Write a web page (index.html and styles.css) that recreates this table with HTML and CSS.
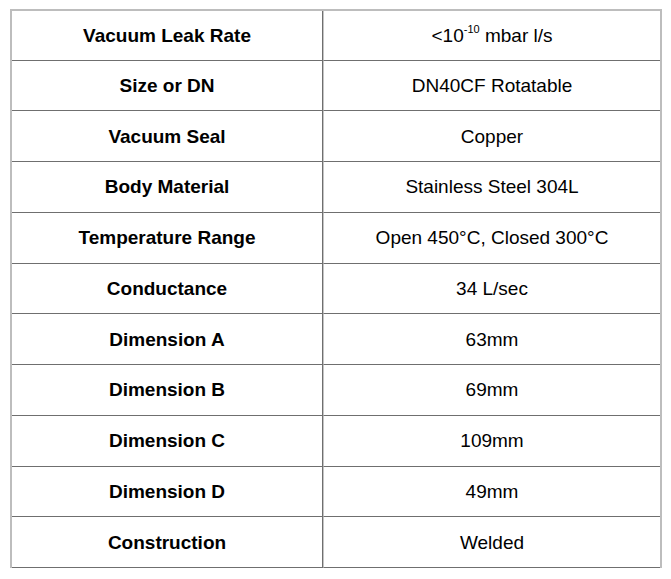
FILE: index.html
```html
<!DOCTYPE html>
<html>
<head>
<meta charset="utf-8">
<link rel="stylesheet" href="styles.css">
</head>
<body>
<table class="spec">
  <tr><td class="key">Vacuum Leak Rate</td><td class="val">&lt;10<sup>-10</sup> mbar l/s</td></tr>
  <tr><td class="key">Size or DN</td><td class="val">DN40CF Rotatable</td></tr>
  <tr><td class="key">Vacuum Seal</td><td class="val">Copper</td></tr>
  <tr><td class="key">Body Material</td><td class="val">Stainless Steel 304L</td></tr>
  <tr><td class="key">Temperature Range</td><td class="val">Open 450°C, Closed 300°C</td></tr>
  <tr><td class="key">Conductance</td><td class="val">34 L/sec</td></tr>
  <tr><td class="key">Dimension A</td><td class="val">63mm</td></tr>
  <tr><td class="key">Dimension B</td><td class="val">69mm</td></tr>
  <tr><td class="key">Dimension C</td><td class="val">109mm</td></tr>
  <tr><td class="key">Dimension D</td><td class="val">49mm</td></tr>
  <tr><td class="key">Construction</td><td class="val">Welded</td></tr>
</table>
</body>
</html>
```
FILE: styles.css
```css
html, body {
  margin: 0;
  padding: 0;
  background: #ffffff;
}
body {
  padding: 9px 0 0 10px;
  font-family: "Liberation Sans", Arial, sans-serif;
  color: #000;
}
.spec {
  border-collapse: separate;
  border-spacing: 0;
  width: 652px;
  table-layout: fixed;
  border-top: 2px solid #bdbdbd;
  border-left: 2px solid #bdbdbd;
  border-right: 2px solid #bdbdbd;
}
.spec td {
  height: 50.75px;
  box-sizing: border-box;
  padding: 1px 0 0 0;
  text-align: center;
  vertical-align: middle;
  font-size: 19px;
  border-bottom: 1px solid #6f6f6f;
}
.spec tr:first-child td {
  height: 49.5px;
}
.spec td.key {
  width: 311px;
  font-weight: bold;
  border-right: 1px solid #6f6f6f;
}
.spec td.val {
  border-left: 1px solid #c4c4c4;
}
.spec sup {
  font-size: 11px;
  line-height: 0;
  vertical-align: 9px;
}
```
